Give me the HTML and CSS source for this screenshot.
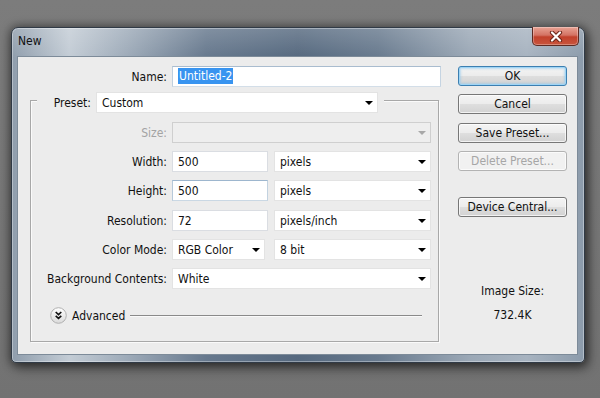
FILE: index.html
```html
<!DOCTYPE html>
<html>
<head>
<meta charset="utf-8">
<title>New</title>
<link rel="stylesheet" href="styles.css">
</head>
<body>
<div class="window">
  <div class="titlebar">
    <span class="title">New</span>
    <div class="close">
      <svg width="14" height="11" viewBox="0 0 14 11">
        <path d="M3 1.5 L11 9.5 M11 1.5 L3 9.5" stroke="#6b2418" stroke-width="4.2" stroke-linecap="round"/>
        <path d="M3 1.5 L11 9.5 M11 1.5 L3 9.5" stroke="#fff" stroke-width="2.2" stroke-linecap="round"/>
      </svg>
    </div>
  </div>
  <div class="client">
    <div class="main">
      <div class="name-row">
        <span class="label name-label">Name:</span>
        <div class="field name-field"><span class="sel">Untitled-2</span></div>
      </div>
      <div class="group">
        <div class="legend">
          <span class="label legend-label">Preset:</span>
          <div class="select preset">Custom<i class="arrow"></i></div>
        </div>
        <div class="grid">
          <span class="label disabled">Size:</span>
          <div class="select off"><i class="arrow grey"></i></div>

          <span class="label">Width:</span>
          <div class="pair"><div class="field num">500</div><div class="select unit">pixels<i class="arrow"></i></div></div>

          <span class="label">Height:</span>
          <div class="pair"><div class="field num focus">500</div><div class="select unit">pixels<i class="arrow"></i></div></div>

          <span class="label">Resolution:</span>
          <div class="pair"><div class="field num">72</div><div class="select unit">pixels/inch<i class="arrow"></i></div></div>

          <span class="label">Color Mode:</span>
          <div class="pair"><div class="select mode">RGB Color<i class="arrow"></i></div><div class="select unit">8 bit<i class="arrow"></i></div></div>

          <span class="label">Background Contents:</span>
          <div class="select">White<i class="arrow"></i></div>
        </div>
        <div class="advanced">
          <svg class="adv-icon" width="17" height="17" viewBox="0 0 17 17">
            <defs>
              <linearGradient id="g" x1="0" y1="0" x2="0" y2="1">
                <stop offset="0" stop-color="#ffffff"/>
                <stop offset="1" stop-color="#dadada"/>
              </linearGradient>
            </defs>
            <circle cx="8.5" cy="8.5" r="7.8" fill="url(#g)" stroke="#b0b0b0" stroke-width="1"/>
            <path d="M5.7 5 L8.5 7.6 L11.3 5 M5.7 8.8 L8.5 11.4 L11.3 8.8" fill="none" stroke="#111" stroke-width="1.6"/>
          </svg>
          <span class="adv-text">Advanced</span>
          <span class="adv-line"></span>
        </div>
      </div>
    </div>
    <div class="side">
      <div class="btn ok">OK</div>
      <div class="btn">Cancel</div>
      <div class="btn save">Save Preset...</div>
      <div class="btn disabled-btn">Delete Preset...</div>
      <div class="btn device">Device Central...</div>
      <div class="img-size">Image Size:</div>
      <div class="img-val">732.4K</div>
    </div>
  </div>
</div>
</body>
</html>
```

FILE: styles.css
```css
* { box-sizing: border-box; }

html, body {
  margin: 0;
  width: 600px;
  height: 398px;
  overflow: hidden;
}

body {
  background: linear-gradient(#7c7c7c, #727272);
  font-family: "DejaVu Sans Condensed", "DejaVu Sans", sans-serif;
  font-stretch: condensed;
  font-size: 12px;
  color: #111;
  padding: 27px 0 0 11px;
}

.window {
  width: 574px;
  height: 336px;
  border: 1px solid #303a46;
  border-radius: 7px 7px 5px 5px;
  background:
    linear-gradient(rgba(255,255,255,0.18), rgba(255,255,255,0) 30px),
    linear-gradient(90deg, #8f9dac 0%, #c3ccd5 10%, #9eabb9 20%, #66788d 34%, #56697f 50%, #687a8e 64%, #9ba8b6 80%, #a7b3c0 90%, #8c9bab 100%);
  box-shadow: 0 0 8px 2px rgba(0,0,0,0.35), 3px 5px 12px rgba(0,0,0,0.45), inset 0 0 0 1px rgba(255,255,255,0.35);
  display: flex;
  flex-direction: column;
}

.titlebar {
  height: 28px;
  display: flex;
  align-items: flex-start;
  flex: none;
}

.title {
  padding: 6px 0 0 6px;
  font-size: 12px;
  color: #111;
}

.close {
  margin: -1px 5px 0 auto;
  width: 47px;
  height: 19px;
  border: 1px solid #5e2a22;
  border-top: none;
  border-radius: 0 0 5px 5px;
  background: linear-gradient(#e9a394 0%, #d47364 45%, #c2412c 55%, #c8553d 100%);
  box-shadow: inset 0 0 0 1px rgba(255,255,255,0.3);
  display: flex;
  align-items: center;
  justify-content: center;
}

.client {
  margin: 0 6px 7px 5px;
  flex: 1;
  background: #ececec;
  border: 1px solid #7d8b99;
  display: flex;
  padding: 9px 10px 0 12px;
}

.main {
  width: 411px;
  flex: none;
}

.label {
  text-align: right;
  line-height: 23px;
  white-space: nowrap;
}

.name-row {
  display: flex;
  height: 21px;
}

.name-label {
  width: 137px;
  margin-right: 5px;
}

.field {
  height: 21px;
  background: #fff;
  border: 1px solid #dadde2;
  padding-left: 5px;
  line-height: 21px;
  white-space: nowrap;
}

.name-field {
  width: 269px;
  border-color: #a9bccf #c5d4e2 #d3dee8 #c0cfdd;
}

.sel {
  display: inline-block;
  background: #3894f0;
  color: #fff;
  line-height: 16px;
  padding: 0 1px;
  margin-top: 1px;
  vertical-align: top;
}

.group {
  margin-top: 13px;
  width: 409px;
  border: 1px solid #a8a8a8;
  box-shadow: inset 1px 1px 0 #fafafa, 1px 1px 0 #fafafa;
  padding: 0 7px 15px 0;
}

.legend {
  display: flex;
  margin: -9px 0 0 6px;
  width: 347px;
  height: 21px;
  background: #ececec;
  padding-right: 6px;
}

.legend-label {
  width: 54px;
  margin-right: 5px;
}

.select {
  position: relative;
  height: 21px;
  background: #fff;
  border: 1px solid #e3e3e3;
  padding-left: 5px;
  line-height: 21px;
  white-space: nowrap;
}

.preset {
  width: 282px;
  height: 21px;
}

.arrow {
  position: absolute;
  right: 4px;
  top: 8px;
  width: 0;
  height: 0;
  border-left: 4px solid transparent;
  border-right: 4px solid transparent;
  border-top: 4px solid #000;
}

.arrow.grey { border-top-color: #a8a8a8; }

.grid {
  margin-top: 9px;
  display: grid;
  grid-template-columns: 136px 259px;
  grid-auto-rows: 21px;
  column-gap: 5px;
  row-gap: 8.2px;
}

.disabled { color: #a3a3a3; }

.select.off {
  background: #eeeeee;
  border-color: #cfcfcf;
}

.pair {
  display: flex;
  justify-content: space-between;
}

.num { width: 96px; }
.num.focus { border-color: #9db6ce #c2d2e0 #cad8e4 #b7c9da; }
.mode { width: 93px; }
.unit { width: 157px; }

.advanced {
  display: flex;
  align-items: center;
  height: 20px;
  margin-top: 17px;
  padding-left: 19px;
}

.adv-icon { flex: none; }

.adv-text {
  margin-left: 5px;
  padding-top: 1px;
}

.adv-line {
  flex: 1;
  height: 1px;
  background: #8a8a8a;
  margin: 0 9px 0 5px;
  box-shadow: 0 1px 0 #fafafa;
}

.side {
  margin-left: 17px;
  width: 109px;
  flex: none;
  display: flex;
  flex-direction: column;
}

.btn {
  height: 20px;
  border: 1px solid #777;
  border-radius: 3px;
  background: linear-gradient(#f4f4f4 0%, #ececec 48%, #dedede 52%, #d2d2d2 100%);
  box-shadow: inset 0 0 0 1px rgba(255,255,255,0.7);
  text-align: center;
  line-height: 19px;
  color: #111;
  margin-bottom: 8px;
}

.btn.ok {
  border-color: #3c7fb1;
  box-shadow: inset 0 0 0 1px #9fd5f5, inset 0 0 2px 2px rgba(140,200,240,0.5);
}

.btn.save { margin-top: 1px; }

.btn.disabled-btn {
  color: #a6a6a6;
  border-color: #b3b3b3;
  background: #f1f1f1;
}

.btn.device { margin-top: 18px; }

.img-size {
  margin-top: 59px;
  text-align: center;
  line-height: 14px;
}

.img-val {
  margin-top: 10px;
  text-align: center;
  line-height: 14px;
}
```
